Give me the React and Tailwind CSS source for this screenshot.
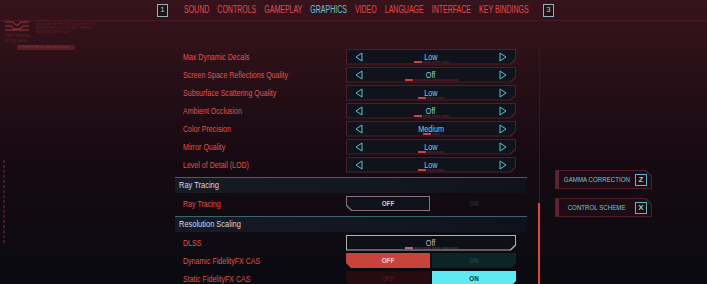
import React from "react";

const tabs = ["SOUND", "CONTROLS", "GAMEPLAY", "GRAPHICS", "VIDEO", "LANGUAGE", "INTERFACE", "KEY BINDINGS"];

const rows = [
  ["Max Dynamic Decals", "Low", 4, 0],
  ["Screen Space Reflections Quality", "Off", 6, 0],
  ["Subsurface Scattering Quality", "Low", 3, 0],
  ["Ambient Occlusion", "Off", 4, 0],
  ["Color Precision", "Medium", 2, 0],
  ["Mirror Quality", "Low", 3, 0],
  ["Level of Detail (LOD)", "Low", 3, 0],
];

const cuts = {
  br: "[clip-path:polygon(0_0,100%_0,100%_calc(100%_-_5px),calc(100%_-_5px)_100%,0_100%)]",
  bl: "[clip-path:polygon(0_0,100%_0,100%_100%,5px_100%,0_calc(100%_-_5px))]",
  tr: "[clip-path:polygon(0_0,calc(100%_-_6px)_0,100%_6px,100%_100%,0_100%)]",
  none: "",
};

function Frame({ cut = "br", border, bg, className = "", inner = "", children }) {
  return (
    <div className={`p-[1px] ${cuts[cut]} ${className}`} style={{ background: border }}>
      <div className={`h-full w-full ${cuts[cut]} ${inner}`} style={{ background: bg }}>
        {children}
      </div>
    </div>
  );
}

function Arrow({ dir }) {
  return (
    <svg width="8" height="10" viewBox="0 0 8 10" className="shrink-0">
      {dir === "left" ? (
        <polygon points="7,1 1,5 7,9" fill="none" stroke="#5fc3d0" strokeWidth="1" />
      ) : (
        <polygon points="1,1 7,5 1,9" fill="none" stroke="#5fc3d0" strokeWidth="1" />
      )}
    </svg>
  );
}

function Steps({ count, active, on = "#c8444a", off = "#3a1a24" }) {
  return (
    <div className="mt-[-1px] flex gap-[1px]">
      {Array.from({ length: count }).map((_, i) => (
        <div key={i} className="h-[2px] w-[8px]" style={{ background: i === active ? on : off }} />
      ))}
    </div>
  );
}

function Value({ children, color }) {
  return (
    <span className="inline-block scale-x-[0.85] text-[8.5px] leading-[10px]" style={{ color }}>
      {children}
    </span>
  );
}

function Selector({ value, count, active }) {
  return (
    <Frame border="#4a1e2a" bg="#10131c" className="mt-[3px] h-[16px] w-[170px] shrink-0" inner="flex items-center px-[8px]">
      <Arrow dir="left" />
      <div className="flex h-full flex-1 flex-col items-center pt-[2px]">
        <Value color="#7fd3de">{value}</Value>
        <Steps count={count} active={active} />
      </div>
      <Arrow dir="right" />
    </Frame>
  );
}

function Label({ children }) {
  return (
    <div className="flex-1">
      <span className="inline-block origin-left scale-x-[0.83] whitespace-nowrap text-[8.5px] text-[#e2524b]">
        {children}
      </span>
    </div>
  );
}

function Row({ label, children }) {
  return (
    <div className="flex h-[18px] items-center pl-[8px] pr-[11px]">
      <Label>{label}</Label>
      {children}
    </div>
  );
}

function Section({ title }) {
  return (
    <div className="mt-[5px] flex h-[16px] items-center border-t border-[#3a6470] bg-[linear-gradient(90deg,#161a24,#121620_70%,#10121b)] pl-[4px]">
      <span className="inline-block origin-left scale-x-[0.83] whitespace-nowrap text-[9px] text-[#d4d8e0]">{title}</span>
    </div>
  );
}

function Half({ cut, border, bg, color, text }) {
  return (
    <Frame cut={cut} border={border} bg={bg} className="h-[15px] w-[84px]" inner="flex items-center justify-center">
      <span className="inline-block scale-x-[0.78] text-[8px] font-bold" style={{ color }}>{text}</span>
    </Frame>
  );
}

function Toggle({ left, right }) {
  return (
    <div className="mt-[3px] flex w-[170px] shrink-0 gap-[2px]">
      <Half cut="bl" {...left} text="OFF" />
      <Half cut="br" {...right} text="ON" />
    </div>
  );
}

function KeyBox({ children, className = "" }) {
  return (
    <div className={`flex h-[13px] w-[11px] items-center justify-center border border-[#8fb4bc] bg-[#1e1216] text-[8px] leading-none text-[#a9cdd4] ${className}`}>
      {children}
    </div>
  );
}

function SideButton({ label, hotkey }) {
  return (
    <Frame cut="tr" border="#4f1d29" bg="#1c0c15" className="h-[19px] w-[97px]" inner="flex items-center border-l-[3px] border-[#5e2430] pr-[4px]">
      <div className="flex min-w-0 flex-1 justify-center">
        <span className="inline-block shrink-0 scale-x-[0.77] whitespace-nowrap text-[8px] text-[#74c6d2]">{label}</span>
      </div>
      <div className="flex h-[12px] w-[12px] shrink-0 items-center justify-center border border-[#5cb9c8] text-[8px] font-bold leading-none text-[#7fd0dc]">
        {hotkey}
      </div>
    </Frame>
  );
}

export default function App() {
  return (
    <div className="h-[284px] w-[707px] overflow-hidden bg-[linear-gradient(180deg,#37131c_0%,#2b1018_22%,#170a12_55%,#0a0a11_100%)] font-['Liberation_Sans',Arial,sans-serif]">
      {/* tab bar */}
      <div className="flex h-[21px] items-center border-b border-[#4a1a24]">
        <div className="w-[157px] shrink-0" />
        <KeyBox>1</KeyBox>
        <div className="ml-[16px] w-[344px] shrink-0">
          <div className="flex origin-left scale-x-[0.7] gap-[11.5px] whitespace-nowrap text-[10px] leading-none">
            {tabs.map((t) => (
              <span key={t} className={t === "GRAPHICS" ? "text-[#60c9da]" : "text-[#e04c4c]"}>
                {t}
              </span>
            ))}
          </div>
        </div>
        <KeyBox className="ml-[15px]">3</KeyBox>
      </div>

      <div className="flex h-[263px]">
        {/* left decoration */}
        <div className="w-[175px] shrink-0 pl-[5px]">
          <div className="flex gap-[4px]">
            <div className="flex flex-col">
              <svg width="24" height="12" viewBox="0 0 24 12">
                <path d="M0 1h8l3 3h2l3-3h8M0 5h6l3 3h6l3-3h6M0 9h24" fill="none" stroke="#7a2a34" strokeWidth="1.3" />
              </svg>
              <span className="text-[4px] leading-[5px] tracking-[0.5px] text-[#7a2a34]">PROTOCOL</span>
              <span className="text-[4px] leading-[5px] tracking-[0.5px] text-[#7a2a34]">RT10-046</span>
            </div>
            <div className="flex flex-col gap-[1px] pt-[2px] text-[3px] leading-[3px] text-[#5e2229]">
              <span>NCL DATA LINK PROTOCOL 2077 NET SYS</span>
              <span>ACCESS NODE 11.4 SECURE CHANNEL</span>
              <span>ARASAKA SUBNET 0x4F</span>
            </div>
          </div>
          <div className="ml-[12px] mt-[2px] flex h-[5px] w-[58px] items-center rounded-[1px] bg-[#5a1a22] px-[2px] text-[3px] leading-none text-[#8a3a42]">
            SYSTEM STATUS: ONLINE 00:00:00
          </div>
          <div className="ml-[-2px] mt-[110px] h-[84px] w-[2px] bg-[repeating-linear-gradient(180deg,#4a1a24_0px,#4a1a24_3px,transparent_3px,transparent_5px)]" />
        </div>

        {/* settings list */}
        <div className="w-[352px] shrink-0 pt-[25px]">
          {rows.map(([label, value, count, active]) => (
            <Row key={label} label={label}>
              <Selector value={value} count={count} active={active} />
            </Row>
          ))}

          <Section title="Ray Tracing" />
          <Row label="Ray Tracing">
            <Toggle
              left={{ border: "#8a6e78", bg: "#0f121b", color: "#dcc8cc" }}
              right={{ border: "transparent", bg: "transparent", color: "#262a33" }}
            />
          </Row>

          <Section title="Resolution Scaling" />
          <Row label="DLSS">
            <Frame border="#b4acb0" bg="#0e1018" className="mt-[3px] h-[16px] w-[170px] shrink-0" inner="flex flex-col items-center pt-[2px]">
              <Value color="#bcb4b8">Off</Value>
              <Steps count={6} active={0} on="#a8707a" off="#2a2630" />
            </Frame>
          </Row>
          <Row label="Dynamic FidelityFX CAS">
            <Toggle
              left={{ border: "#c6443c", bg: "#c6443c", color: "#ffd2ca" }}
              right={{ border: "#0d2426", bg: "#0d2426", color: "#1f4749" }}
            />
          </Row>
          <Row label="Static FidelityFX CAS">
            <Toggle
              left={{ border: "#260b10", bg: "#260b10", color: "#4c1a20" }}
              right={{ border: "#5ee9f3", bg: "#5ee9f3", color: "#0b3138" }}
            />
          </Row>
        </div>

        {/* scrollbar */}
        <div className="ml-[11px] flex w-[2px] shrink-0 flex-col pt-[25px]">
          <div className="mx-auto h-[157px] w-[1px] bg-[#3a1620]" />
          <div className="flex-1 bg-[#e0463f]" />
        </div>

        {/* side buttons */}
        <div className="ml-[15px] flex flex-col gap-[9px] pt-[149px]">
          <SideButton label="GAMMA CORRECTION" hotkey="Z" />
          <SideButton label="CONTROL SCHEME" hotkey="X" />
        </div>
      </div>
    </div>
  );
}
